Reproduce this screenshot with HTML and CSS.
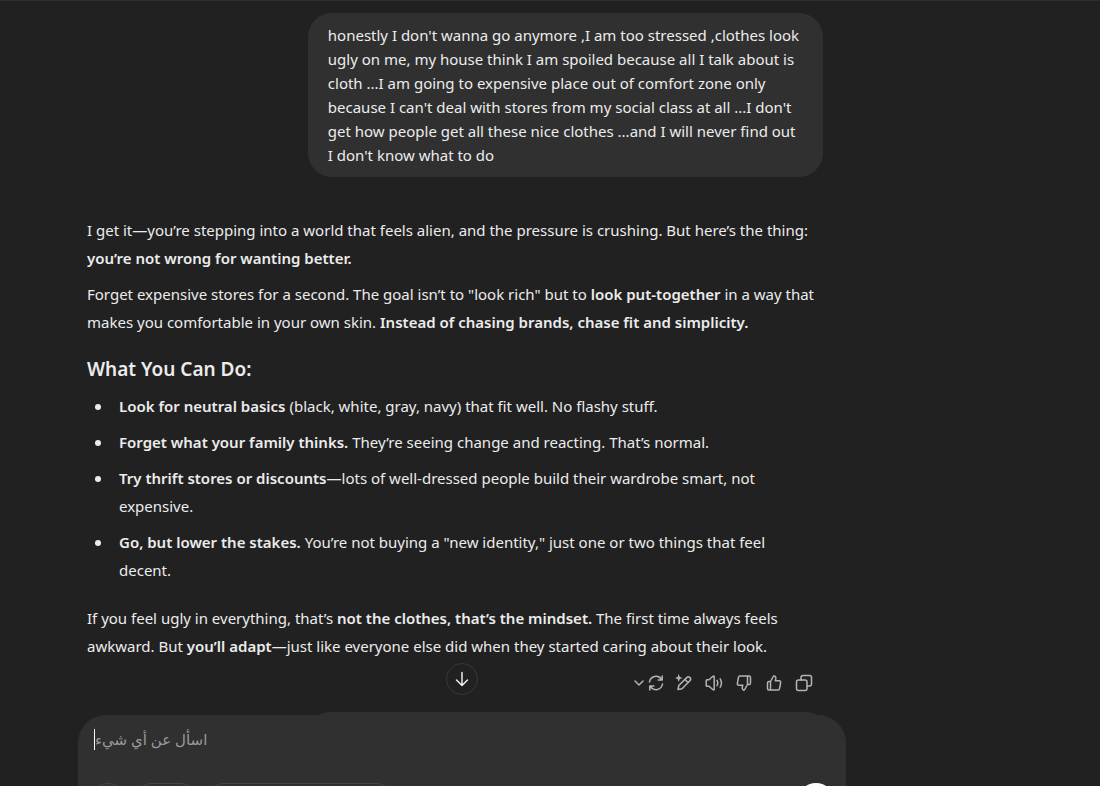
FILE: index.html
```html
<!DOCTYPE html>
<html lang="en">
<head>
	<meta charset="UTF-8">
	<meta name="viewport" content="width=device-width, initial-scale=1">
	<title>Chat</title>
	<link rel="stylesheet" href="styles.css">
</head>
<body>
<main class="chat">
	<div class="thread">
		<div class="user-row">
			<div class="bubble">honestly I don't wanna go anymore ,I am too stressed ,clothes look<br>ugly on me, my house think I am spoiled because all I talk about is<br>cloth ...I am going to expensive place out of comfort zone only<br>because I can't deal with stores from my social class at all ...I don't<br>get how people get all these nice clothes ...and I will never find out<br>I don't know what to do</div>
		</div>
		<article class="answer">
			<p>I get it—you’re stepping into a world that feels alien, and the pressure is crushing. But here’s the thing:<br><strong>you’re not wrong for wanting better.</strong></p>
			<p>Forget expensive stores for a second. The goal isn’t to "look rich" but to <strong>look put-together</strong> in a way that<br>makes you comfortable in your own skin. <strong>Instead of chasing brands, chase fit and simplicity.</strong></p>
			<h3>What You Can Do:</h3>
			<ul>
				<li><strong>Look for neutral basics</strong> (black, white, gray, navy) that fit well. No flashy stuff.</li>
				<li><strong>Forget what your family thinks.</strong> They’re seeing change and reacting. That’s normal.</li>
				<li><strong>Try thrift stores or discounts</strong>—lots of well-dressed people build their wardrobe smart, not<br>expensive.</li>
				<li><strong>Go, but lower the stakes.</strong> You’re not buying a "new identity," just one or two things that feel<br>decent.</li>
			</ul>
			<p>If you feel ugly in everything, that’s <strong>not the clothes, that’s the mindset.</strong> The first time always feels<br>awkward. But <strong>you’ll adapt</strong>—just like everyone else did when they started caring about their look.</p>
		</article>
		<div class="actions">
			<button type="button" class="action retry" aria-label="Try again">
				<svg class="chevron" viewBox="0 0 12 12"><path d="M2 4l4 4 4-4"/></svg>
				<svg viewBox="0 0 18 18"><path d="M2.500 8A6.600 6.600 0 0 1 14.500 5.300M15.200 2v4h-4M15.500 10A6.600 6.600 0 0 1 3.500 12.700M2.800 16v-4h4"/></svg>
			</button>
			<button type="button" class="action" aria-label="Edit">
				<svg viewBox="0 0 18 18"><path d="M3 15.500l.8-4L11.700 3.600a2.200 2.200 0 0 1 3.200 3.200L7 14.700zM10 5.500l3 3"/><path class="fill" d="M3.700 0l1.100 2.900 2.900 1.100-2.900 1.100L3.700 8 2.600 5.100-.3 4l2.900-1.100z"/></svg>
			</button>
			<button type="button" class="action" aria-label="Read aloud">
				<svg viewBox="0 0 18 18"><path d="M1.200 6.500q0-.8.8-.8h2L8 2.300q1.200-.8 1.200.7v12q0 1.500-1.200.7L4 12.300H2q-.8 0-.8-.8zM12 6.300q1.500 2.700 0 5.400M15.200 4.800q2.500 4.200 0 8.400"/></svg>
			</button>
			<button type="button" class="action" aria-label="Bad response">
				<svg viewBox="0 0 18 18"><path d="M12.500 2v8.500M5 2h9q1.500 0 1.500 1.500V9q0 1.500-1.500 1.500h-1.500L9.700 15.500Q9.300 16.400 8.400 16q-1.700-.8-1.200-2.700l.6-2H4q-2 0-1.600-2l1-5.600Q3.700 2 5 2z"/></svg>
			</button>
			<button type="button" class="action" aria-label="Good response">
				<svg viewBox="0 0 18 18"><path d="M5.500 16V7.500M13 16H4q-1.500 0-1.500-1.500V9Q2.500 7.500 4 7.500h1.500L8.300 2.500Q8.700 1.600 9.600 2q1.700.8 1.200 2.700l-.6 2H14q2 0 1.600 2l-1 5.600Q14.300 16 13 16z"/></svg>
			</button>
			<button type="button" class="action" aria-label="Copy">
				<svg viewBox="0 0 18 18"><rect x="1.500" y="6" width="10.500" height="10.500" rx="2"/><path d="M6 6V3.500q0-2 2-2h6.500q2 0 2 2V10q0 2-2 2H12"/></svg>
			</button>
			<button type="button" class="scroll-down" aria-label="Scroll to bottom">
				<svg viewBox="0 0 18 18"><path d="M9 2.500v13M3.500 10L9 15.500 14.500 10"/></svg>
			</button>
		</div>
	</div>
	<form class="composer">
		<div class="field">
			<span class="caret"></span>
			<textarea class="prompt" rows="1" aria-label="اسأل عن أي شيء" placeholder="اسأل عن أي شيء"></textarea>
		</div>
		<div class="tools">
			<button type="button" class="tool tool-round" aria-label="Attach"></button>
			<button type="button" class="tool tool-short" aria-label="Search"></button>
			<button type="button" class="tool tool-long" aria-label="Research"></button>
			<button type="submit" class="send" aria-label="Send"></button>
		</div>
	</form>
</main>
</body>
</html>
```
FILE: styles.css
```css
* {
	box-sizing: border-box;
	margin: 0;
	padding: 0;
}
body {
	background: #212121;
	color: #ececec;
	font-family: "Noto Sans", "Open Sans", sans-serif;
	font-size: 15px;
	line-height: 28px;
}
button {
	background: none;
	border: 0;
	color: inherit;
	cursor: pointer;
}
svg {
	display: block;
	width: 18px;
	height: 18px;
	fill: none;
	stroke: currentColor;
	stroke-width: 1.5;
	stroke-linecap: round;
	stroke-linejoin: round;
}
.fill {
	fill: currentColor;
	stroke: none;
}
.chat {
	height: 100vh;
	overflow: hidden;
	border-top: 1px solid #2e2e2e;
	padding: 12px 254px 0 78px;
}
.thread {
	padding: 0 23px 0 9px;
}
.user-row {
	display: flex;
	justify-content: flex-end;
	margin-bottom: 39px;
}
.bubble {
	width: 70%;
	padding: 10px 0 10px 20px;
	border-radius: 24px;
	background: #303030;
	line-height: 24px;
	white-space: nowrap;
}
.answer {
	white-space: nowrap;
}
.answer p + p {
	margin-top: 8px;
}
.answer strong,
.answer h3 {
	font-weight: 600;
}
.answer h3 {
	margin: 19px 0 9px;
	font-size: 19px;
}
.answer ul {
	margin-bottom: 20px;
	padding-left: 32px;
	list-style: none;
}
.answer li {
	position: relative;
}
.answer li + li {
	margin-top: 8px;
}
.answer li::before {
	content: "";
	position: absolute;
	left: -24px;
	top: 12px;
	width: 6px;
	height: 6px;
	border-radius: 50%;
	background: #ececec;
}
.actions {
	position: relative;
	display: flex;
	justify-content: flex-end;
	gap: 12px;
	margin-top: 8px;
	padding-right: 10px;
	height: 30px;
	color: #b4b4b4;
}
.action {
	display: flex;
	align-items: center;
}
.retry {
	margin-right: -2px;
}
.chevron {
	width: 12px;
	height: 12px;
	margin-right: 2px;
}
.scroll-down {
	position: absolute;
	left: 50%;
	top: -5px;
	display: flex;
	align-items: center;
	justify-content: center;
	width: 32px;
	height: 32px;
	margin-left: -9px;
	border: 1px solid #383838;
	border-radius: 50%;
	color: #ececec;
}
.composer {
	position: relative;
	margin-top: 17px;
	padding: 9px 12px 12px;
	border-radius: 28px;
	background: #303030;
}
.composer::before {
	content: "";
	position: absolute;
	left: 232px;
	right: 20px;
	top: -3px;
	height: 40px;
	border-radius: 28px;
	background: #303030;
}
.field {
	position: relative;
	display: flex;
	align-items: center;
	height: 30px;
	padding-left: 4px;
}
.caret {
	width: 1px;
	height: 21px;
	background: #fff;
}
.prompt {
	flex: 1;
	height: 28px;
	border: 0;
	outline: 0;
	resize: none;
	background: none;
	color: #ececec;
	font-family: "Noto Sans", "DejaVu Sans", sans-serif;
	font-size: 15px;
	line-height: 28px;
}
.prompt::placeholder {
	color: #9b9b9b;
}
.tools {
	display: flex;
	gap: 8px;
	margin-top: 29px;
}
.tool {
	height: 36px;
	border: 1px solid #454545;
	border-radius: 18px;
}
.tool-round {
	width: 36px;
}
.tool-short {
	width: 64px;
}
.tool-long {
	width: 188px;
}
.send {
	width: 36px;
	height: 36px;
	margin-left: auto;
	border-radius: 50%;
	background: #fff;
}
```
